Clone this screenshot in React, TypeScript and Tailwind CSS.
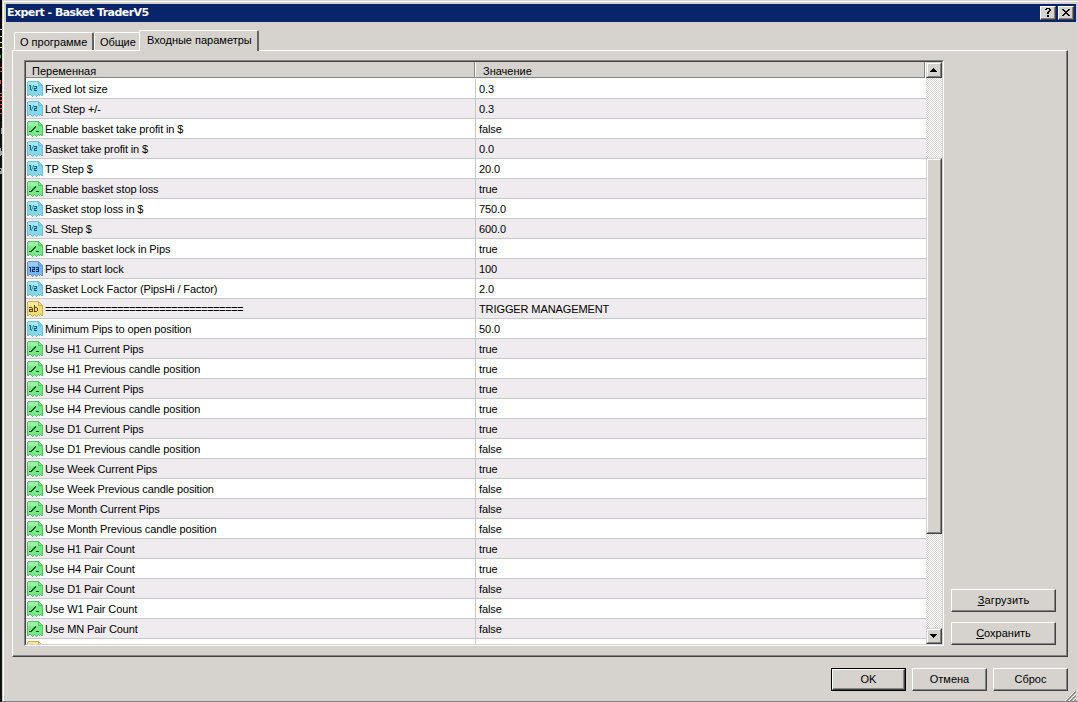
import type { ReactNode } from "react";

type Kind = "double" | "bool" | "int" | "string";

interface Param {
  kind: Kind;
  name: string;
  value: string;
}

const params: Param[] = [
  { kind: "double", name: "Fixed lot size", value: "0.3" },
  { kind: "double", name: "Lot Step +/-", value: "0.3" },
  { kind: "bool", name: "Enable basket take profit in $", value: "false" },
  { kind: "double", name: "Basket take profit in $", value: "0.0" },
  { kind: "double", name: "TP Step $", value: "20.0" },
  { kind: "bool", name: "Enable basket stop loss", value: "true" },
  { kind: "double", name: "Basket stop loss in $", value: "750.0" },
  { kind: "double", name: "SL Step $", value: "600.0" },
  { kind: "bool", name: "Enable basket lock in Pips", value: "true" },
  { kind: "int", name: "Pips to start lock", value: "100" },
  { kind: "double", name: "Basket Lock Factor (PipsHi / Factor)", value: "2.0" },
  { kind: "string", name: "=================================", value: "TRIGGER MANAGEMENT" },
  { kind: "double", name: "Minimum Pips to open position", value: "50.0" },
  { kind: "bool", name: "Use H1 Current Pips", value: "true" },
  { kind: "bool", name: "Use H1 Previous candle position", value: "true" },
  { kind: "bool", name: "Use H4 Current Pips", value: "true" },
  { kind: "bool", name: "Use H4 Previous candle position", value: "true" },
  { kind: "bool", name: "Use D1 Current Pips", value: "true" },
  { kind: "bool", name: "Use D1 Previous candle position", value: "false" },
  { kind: "bool", name: "Use Week Current Pips", value: "true" },
  { kind: "bool", name: "Use Week Previous candle position", value: "false" },
  { kind: "bool", name: "Use Month Current Pips", value: "false" },
  { kind: "bool", name: "Use Month Previous candle position", value: "false" },
  { kind: "bool", name: "Use H1 Pair Count", value: "true" },
  { kind: "bool", name: "Use H4 Pair Count", value: "true" },
  { kind: "bool", name: "Use D1 Pair Count", value: "false" },
  { kind: "bool", name: "Use W1 Pair Count", value: "false" },
  { kind: "bool", name: "Use MN Pair Count", value: "false" },
  { kind: "string", name: "", value: "" },
];

const palette: Record<Kind, { fill: string; light: string; edge: string; ink: string }> = {
  double: { fill: "#84d8ea", light: "#a4e8f4", edge: "#6cc0d8", ink: "#14607c" },
  bool: { fill: "#78e888", light: "#98f4a4", edge: "#50c468", ink: "#0c5420" },
  int: { fill: "#7cb4ec", light: "#98c8f4", edge: "#5c98d4", ink: "#0c3468" },
  string: { fill: "#f0dc78", light: "#f8e894", edge: "#ccb050", ink: "#5c4808" },
};

function TypeIcon({ kind }: { kind: Kind }) {
  const c = palette[kind];
  return (
    <svg width="16" height="16" viewBox="0 0 16 16" shapeRendering="crispEdges" className="block shrink-0">
      <path d="M1 0h10l5 4v11h-1v-1h-2v1h-1v-1h-1v1h-1v1H9v-1H8v-1H7v1H6v1H5v-1H4v-1H2v1H0V1h1z" fill={c.fill} />
      <path d="M1 1h10v4H1z" fill={c.light} />
      <path
        d="M1 0h11v1H1zM0 1h1v14H0zM15 5h1v10h-1zM11 1h1v3h4v1h-5zM12 1h1v1h-1zM13 2h1v1h-1zM14 3h1v1h-1zM1 14h1v1H1zM2 13h2v1H2zM4 14h1v1H4zM5 15h1v1H5zM6 14h1v1H6zM7 13h1v1H7zM8 14h1v1H8zM9 15h1v1H9zM10 14h1v1h-1zM11 13h1v1h-1zM12 14h1v1h-1zM13 13h1v1h-1zM14 14h1v1h-1z"
        fill={c.edge}
      />
      {kind === "double" && (
        <>
          <path d="M2 4h2v5H3V5H2zM7 5h3v3H8v1h2v1H7V7h2V6H7z" fill={c.ink} />
          <path d="M6 4h1v2H6zM5 6h1v2H5zM4 8h1v2H4z" fill={c.ink} opacity="0.6" />
        </>
      )}
      {kind === "bool" && (
        <path d="M2 10h2V9h1V8h1V7h1V6h1V5h1v2H8v1H7v1H6v1H5v1H2zM9 10h3v1H9z" fill={c.ink} />
      )}
      {kind === "int" && (
        <path d="M2 6h2v5H3V7H2zM5 6h3v3H6v1h2v1H5V8h2V7H5zM9 6h3v5H9v-1h2V9H9V8h2V7H9z" fill={c.ink} />
      )}
      {kind === "string" && (
        <path d="M2 6h3v1h1v4H2V8h3V7H2zM3 9v1h2V9zM7 4h1v2h2v1h1v3h-1v1H7zM8 7v3h2V7z" fillRule="evenodd" fill={c.ink} />
      )}
    </svg>
  );
}

function Row({ param, odd, first }: { param: Param; odd: boolean; first: boolean }) {
  const ruler = param.name.startsWith("=");
  return (
    <div
      className={`flex shrink-0 border-b border-[#c8c8cc] ${first ? "h-[21px] pt-px" : "h-5"} ${
        odd ? "bg-[#efebef]" : "bg-white"
      }`}
    >
      <div className="flex w-[449px] shrink-0 items-start pl-px pt-[2px]">
        <TypeIcon kind={param.kind} />
        <span className={`ml-[2px] leading-[17px] ${ruler ? "tracking-[-0.42px]" : "tracking-[-0.12px]"}`}>
          {param.name}
        </span>
      </div>
      <div className="flex-1 border-l border-[#c8c8cc] pt-[2px] pl-[3px] leading-[17px] tracking-[-0.1px]">
        {param.value}
      </div>
    </div>
  );
}

function Button({ children, className = "" }: { children: ReactNode; className?: string }) {
  return (
    <button
      className={`border border-t-white border-l-white border-r-[#424142] border-b-[#424142] bg-[#d6d3ce] ${className}`}
    >
      <span className="flex h-full w-full items-center justify-center border-r border-b border-[#848284] pt-px pl-px">
        <span>{children}</span>
      </span>
    </button>
  );
}

function Arrow({ down }: { down?: boolean }) {
  return (
    <div className="h-4 w-4 shrink-0 border border-t-[#d6d3ce] border-l-[#d6d3ce] border-r-[#424142] border-b-[#424142]">
      <div className="h-full w-full border border-t-white border-l-white border-r-[#848284] border-b-[#848284] bg-[#d6d3ce]">
        <svg width="12" height="12" shapeRendering="crispEdges">
          <path d={down ? "M2 4h7v1H8v1H7v1H6v1H5V7H4V6H3V5H2z" : "M5 4h1v1h1v1h1v1h1v1H2V7h1V6h1V5h1z"} />
        </svg>
      </div>
    </div>
  );
}

function CaptionButton({ path }: { path: string }) {
  return (
    <div className="h-[14px] w-4 border border-t-white border-l-white border-r-[#424142] border-b-[#424142] bg-[#d6d3ce]">
      <div className="h-full w-full border-r border-b border-[#848284]">
        <svg width="13" height="11" shapeRendering="crispEdges">
          <path d={path} />
        </svg>
      </div>
    </div>
  );
}

// Slice of the chart that shows left of the dialog
function ChartEdge() {
  return (
    <svg width="2" height="702" shapeRendering="crispEdges" className="shrink-0 bg-black">
      <path d="M0 29h2v1H0zM0 36h2v1H0z" fill="#fff" />
      <path d="M0 42h2v1H0zM0 47h2v1H0z" fill="#ff0" />
      <path d="M0 55h1v3H0z" fill="#0c0" />
      <path d="M0 67h2v1H0zM0 71h2v1H0zM0 80h1v4H0zM0 93h2v1H0zM0 96h2v1H0zM0 100h2v1H0zM0 104h2v1H0zM0 108h2v1H0zM0 113h2v1H0z" fill="#f04830" />
      <path d="M0 121h2v579H0z" fill="#101010" />
      <path d="M1 128h1v6H1zM0 148h1v8H0zM1 151h1v4H1zM0 168h2v1H0zM1 169h1v5H1zM0 171h1v3H0z" fill="#a5a5a5" />
    </svg>
  );
}

export default function App() {
  return (
    <div className="flex h-[702px] w-[1078px] cursor-default overflow-hidden bg-[#d6d3ce] font-['Liberation_Sans',Arial,sans-serif] text-[11px] text-black">
      <ChartEdge />
      <div className="flex min-w-0 flex-1 flex-col border-b border-l border-[#848284] border-l-[#d6d3ce] pt-px">
        <div className="flex min-h-0 flex-1 flex-col border-t border-l border-white pt-[2px] pl-[2px]">
          <div className="mr-[2px] flex h-[18px] shrink-0 items-center bg-[#08246b] pr-[2px] pl-px">
            <span className="flex-1 pt-px font-['DejaVu_Sans',sans-serif] text-[11px] font-bold tracking-[-0.55px] text-white">
              Expert - Basket TraderV5
            </span>
            <div className="flex gap-[2px]">
              <CaptionButton path="M5 1h4v1h1v2H9v1H8v2H6V5h1V4h1V2H6v1H4V2h1zM6 8h2v2H6z" />
              <CaptionButton path="M3 2h2v1h1v1h2V3h1V2h2v1h-1v1H9v1H8v1h1v1h1v1h1v1H9V8H8V7H6v1H5v1H3V8h1V7h1V6h1V5H5V4H4V3H3z" />
            </div>
          </div>

          <div className="mt-2 ml-[6px] flex h-5 shrink-0 items-end pl-[2px]">
            <div className="h-[18px] w-[80px] rounded-t-[2px] border-t border-l border-r-2 border-white border-r-[#636163] pl-[5px] leading-[18px]">
              О программе
            </div>
            <div className="h-[18px] w-[45px] rounded-tl-[2px] border-t border-l border-white pl-[5px] leading-[18px] tracking-[-0.1px]">
              Общие
            </div>
            <div className="relative top-px h-[21px] w-[120px] rounded-t-[2px] border-t border-l border-r-2 border-white border-r-[#636163] bg-[#d6d3ce] pl-[7px] leading-[19px]">
              Входные параметры
            </div>
          </div>

          <div className="mr-[10px] ml-[6px] h-[607px] shrink-0 border border-t-white border-l-white border-r-[#424142] border-b-[#424142]">
            <div className="flex h-full border-r border-b border-[#848284] pt-[9px] pl-[11px]">
              <div className="h-[586px] w-[920px] border border-t-[#848284] border-l-[#848284] border-r-white border-b-white">
                <div className="flex h-full border border-t-[#424142] border-l-[#424142] border-r-[#d6d3ce] border-b-[#d6d3ce] bg-white">
                  <div className="flex min-w-0 flex-1 flex-col overflow-hidden">
                    <div className="flex h-4 shrink-0 border-b border-[#848284] bg-[#d6d3ce] leading-[18px]">
                      <div className="w-[449px] border-r border-[#848284] pl-[6px]">Переменная</div>
                      <div className="w-[450px] border-r border-l border-[#848284] border-l-white pl-[7px]">Значение</div>
                      <div className="h-4 w-px bg-white" />
                    </div>
                    {params.map((param, i) => (
                      <Row key={i} param={param} odd={i % 2 === 1} first={i === 0} />
                    ))}
                  </div>
                  <div className="flex w-4 shrink-0 flex-col bg-[repeating-conic-gradient(#fff_0_25%,#d6d3ce_0_50%)] bg-[length:2px_2px]">
                    <Arrow />
                    <div className="mt-20 h-[376px] border border-t-[#d6d3ce] border-l-[#d6d3ce] border-r-[#424142] border-b-[#424142]">
                      <div className="h-full border border-t-white border-l-white border-r-[#848284] border-b-[#848284] bg-[#d6d3ce]" />
                    </div>
                    <div className="flex-1" />
                    <Arrow down />
                  </div>
                </div>
              </div>
              <div className="ml-[7px] flex flex-col justify-end gap-[10px] pb-[10px]">
                <Button className="h-[23px] w-[105px] tracking-[0.15px]">
                  <u>З</u>агрузить
                </Button>
                <Button className="h-[23px] w-[105px]">
                  <u>С</u>охранить
                </Button>
              </div>
            </div>
          </div>

          <div className="mt-[11px] mr-[10px] flex justify-end gap-[6px]">
            <div className="h-[23px] w-[75px] border border-black">
              <Button className="block h-full w-full">OK</Button>
            </div>
            <Button className="h-[23px] w-[75px]">Отмена</Button>
            <Button className="h-[23px] w-[75px]">Сброс</Button>
          </div>
          <div className="flex flex-1 items-end justify-end pr-[2px] pb-px">
            <svg width="11" height="10" viewBox="0 0 11 10" className="block">
              <path d="M0 10L10 0M4 10L11 3M8 10L11 7" stroke="#fff" />
              <path d="M1.5 10L11 .5M5.5 10L11 4.5M9.5 10L11 8.5" stroke="#848284" strokeWidth="1.4" />
            </svg>
          </div>
        </div>
      </div>
    </div>
  );
}
